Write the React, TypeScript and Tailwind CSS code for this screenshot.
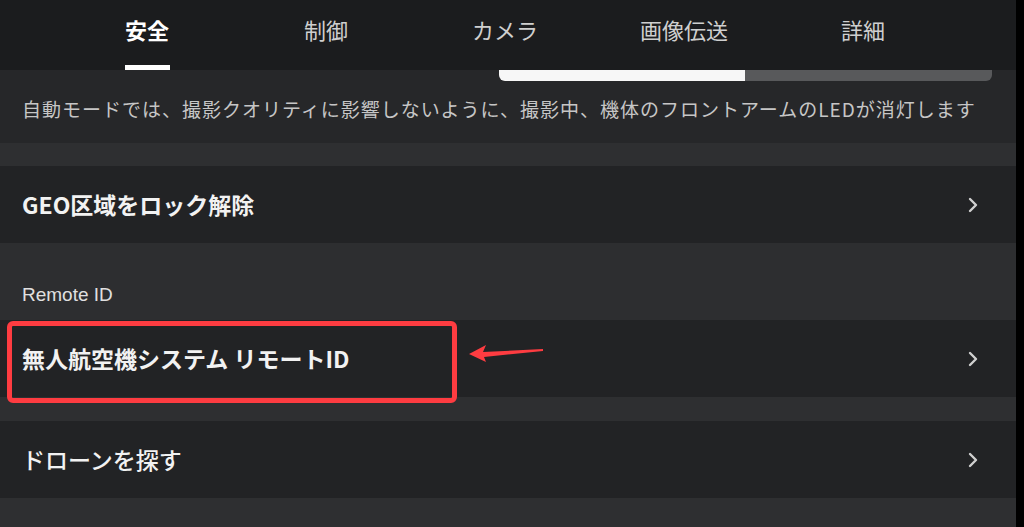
import React from 'react';

const font = { fontFamily: '"Noto Sans CJK JP", "Noto Sans", sans-serif' };

const Chevron = () => (
  <svg width="14" height="18" viewBox="0 0 14 18" fill="none" className="shrink-0">
    <path d="M4 3l6 6-6 6" stroke="#d0d0d0" strokeWidth="2.4" strokeLinecap="round" strokeLinejoin="round" />
  </svg>
);

const Row = ({ label, bold = false }: { label: string; bold?: boolean }) => (
  <div className="h-[77px] bg-[#222325] flex items-center justify-between pl-[22px] pr-[36px]">
    <span className={`text-[23px] text-[#f2f2f2] ${bold ? 'font-bold' : 'font-medium'}`}>{label}</span>
    <Chevron />
  </div>
);

const App = () => {
  const tabs = ['安全', '制御', 'カメラ', '画像伝送', '詳細'];

  return (
    <div className="w-[1024px] h-[527px] overflow-hidden bg-black flex" style={font}>
      <div className="w-[1016px] h-full flex flex-col relative">
        {/* Tabs */}
        <div className="h-[70px] shrink-0 bg-[#1b1c1e] flex justify-center pr-[6px]">
          <div className="flex">
            {tabs.map((t, i) => (
              <div key={t} className="w-[179px] flex flex-col items-center justify-end">
                <span
                  className={`text-[22px] leading-none mb-[25px] ${
                    i === 0 ? 'text-white font-bold' : 'text-[#cfcfcf]'
                  }`}
                >
                  {t}
                </span>
                <div className={`h-[5px] w-[45px] ${i === 0 ? 'bg-white' : 'bg-transparent'}`} />
              </div>
            ))}
          </div>
        </div>

        {/* Description */}
        <div className="h-[73px] shrink-0 bg-[#262729] flex flex-col">
          <div className="flex pl-[499px] pr-[24px]">
            <div className="h-[11px] w-[246px] bg-[#f7f7f7] rounded-bl-[6px]" />
            <div className="h-[11px] flex-1 bg-[#58595b] rounded-br-[6px]" />
          </div>
          <div className="flex-1 flex items-center pl-[22px] pb-[6px]">
            <span className="text-[19px] text-[#c6c6c6] tracking-[1px] whitespace-nowrap">
              自動モードでは、撮影クオリティに影響しないように、撮影中、機体のフロントアームのLEDが消灯します
            </span>
          </div>
        </div>

        <div className="h-[23px] shrink-0 bg-[#2e2f31]" />
        <Row label="GEO区域をロック解除" bold />

        <div className="h-[77px] shrink-0 bg-[#2d2e30] flex items-end pl-[22px] pb-[16px]">
          <span className="text-[19px] text-[#e0e0e0] leading-none" style={{ fontFamily: '"Liberation Sans", "Noto Sans CJK JP", sans-serif' }}>
            Remote ID
          </span>
        </div>
        <Row label="無人航空機システム リモートID" bold />

        <div className="h-[24px] shrink-0 bg-[#2e2f31]" />
        <Row label="ドローンを探す" />
        <div className="flex-1 bg-[#2e2f31]" />

        {/* annotation */}
        <div className="absolute left-[7px] top-[321px] w-[450px] h-[82px] border-[5px] border-[#fe3c41] rounded-[6px]" />
        <svg className="absolute left-[466px] top-[343px]" width="80" height="22" viewBox="0 0 80 22">
          <path d="M3 11 L20 2 L17 9 L77 6 L77 8 L18 14 L20 19 Z" fill="#fe3c41" />
        </svg>
      </div>
    </div>
  );
};

export default App;
